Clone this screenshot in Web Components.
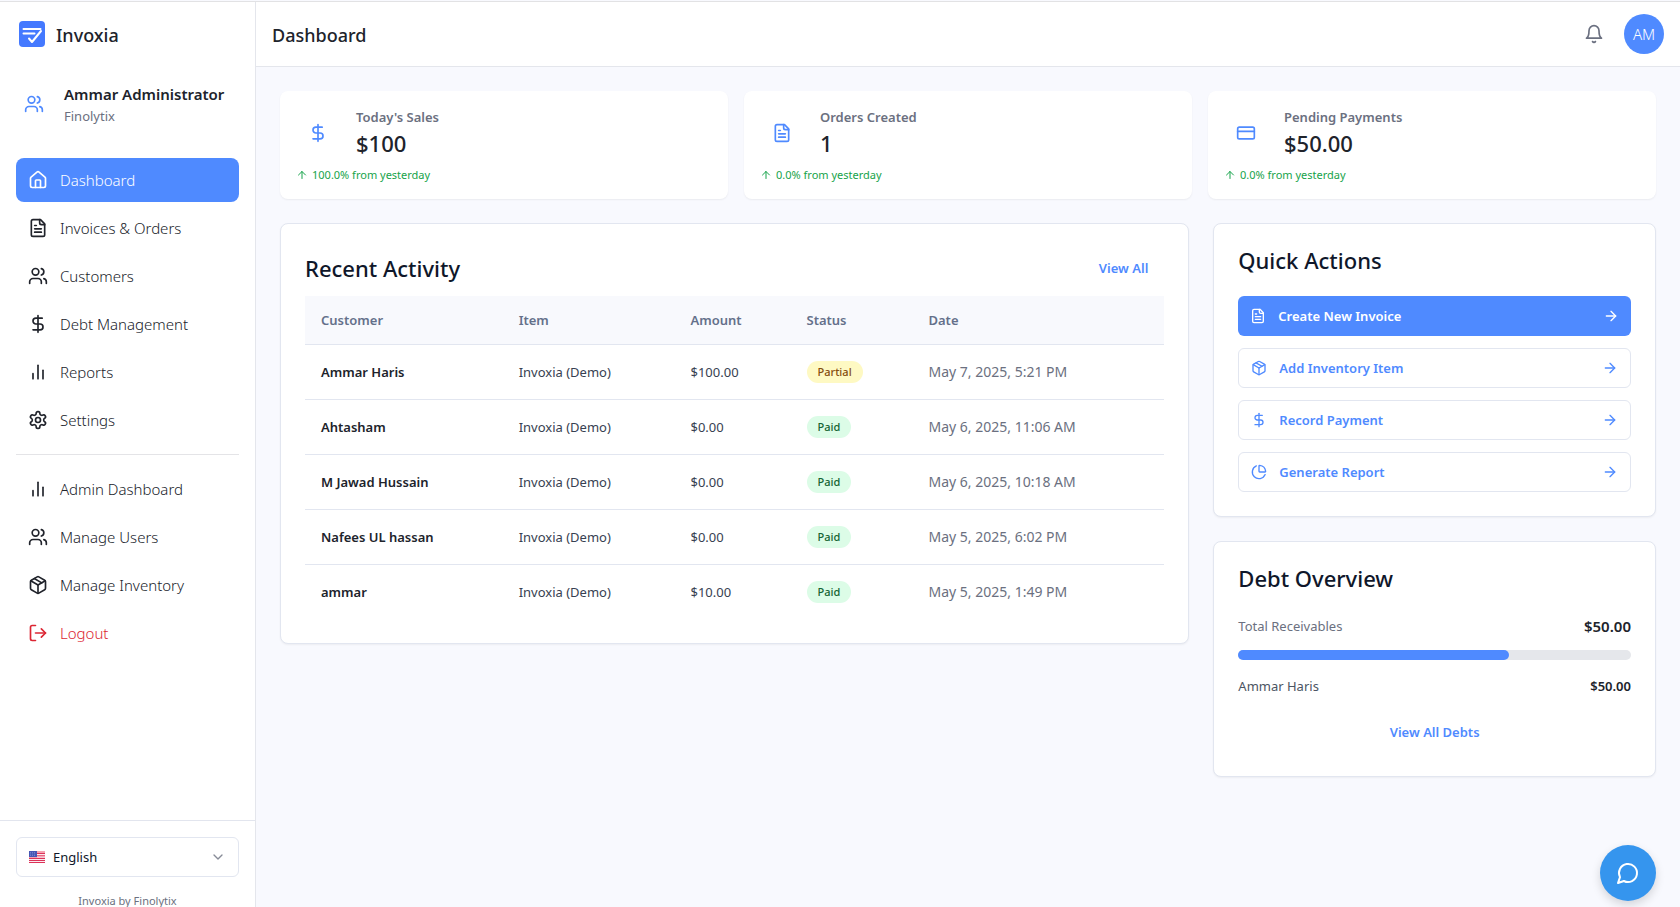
<!DOCTYPE html>
<html lang="en">
<head>
<meta charset="utf-8">
<meta name="viewport" content="width=device-width, initial-scale=1">
<title>Dashboard - Invoxia</title>
<style>
	body {
		margin: 0;
		overflow: hidden;
		background: #f8f9fe;
		color: #20232b;
		font-family: "Noto Sans", "Open Sans", sans-serif;
		font-size: 13px;
		line-height: 20px;
	}
</style>
</head>
<body>
<app-shell>
	<side-bar slot="sidebar"></side-bar>
	<top-bar slot="header" heading="Dashboard" initials="AM"></top-bar>

	<stat-card slot="stats" icon="dollar" label="Today's Sales" value="$100" change="100.0% from yesterday"></stat-card>
	<stat-card slot="stats" icon="file" label="Orders Created" value="1" change="0.0% from yesterday"></stat-card>
	<stat-card slot="stats" icon="card" label="Pending Payments" value="$50.00" change="0.0% from yesterday"></stat-card>

	<panel-card slot="main" heading="Recent Activity">
		<text-link slot="action">View All</text-link>
		<activity-table></activity-table>
	</panel-card>

	<panel-card slot="side" heading="Quick Actions">
		<action-list>
			<action-button icon="file" primary>Create New Invoice</action-button>
			<action-button icon="box">Add Inventory Item</action-button>
			<action-button icon="dollar">Record Payment</action-button>
			<action-button icon="pie">Generate Report</action-button>
		</action-list>
	</panel-card>
	<panel-card slot="side" heading="Debt Overview">
		<debt-overview></debt-overview>
	</panel-card>
</app-shell>
<chat-button></chat-button>

<script>
const ICONS = {
	home: '<path d="M15 21v-8a1 1 0 0 0-1-1h-4a1 1 0 0 0-1 1v8"/><path d="M3 10a2 2 0 0 1 .709-1.528l7-5.999a2 2 0 0 1 2.582 0l7 5.999A2 2 0 0 1 21 10v9a2 2 0 0 1-2 2H5a2 2 0 0 1-2-2z"/>',
	file: '<path d="M15 2H6a2 2 0 0 0-2 2v16a2 2 0 0 0 2 2h12a2 2 0 0 0 2-2V7Z"/><path d="M14 2v4a2 2 0 0 0 2 2h4"/><path d="M10 9H8"/><path d="M16 13H8"/><path d="M16 17H8"/>',
	users: '<path d="M16 21v-2a4 4 0 0 0-4-4H6a4 4 0 0 0-4 4v2"/><circle cx="9" cy="7" r="4"/><path d="M22 21v-2a4 4 0 0 0-3-3.87"/><path d="M16 3.13a4 4 0 0 1 0 7.75"/>',
	dollar: '<path d="M12 2v20"/><path d="M17 5H9.500a3.500 3.500 0 0 0 0 7h5a3.500 3.500 0 0 1 0 7H6"/>',
	chart: '<path d="M18 20V10"/><path d="M12 20V4"/><path d="M6 20v-6"/>',
	settings: '<path d="M12.220 2h-.44a2 2 0 0 0-2 2v.18a2 2 0 0 1-1 1.730l-.43.250a2 2 0 0 1-2 0l-.15-.080a2 2 0 0 0-2.730.730l-.22.380a2 2 0 0 0 .73 2.730l.15.100a2 2 0 0 1 1 1.720v.510a2 2 0 0 1-1 1.740l-.15.090a2 2 0 0 0-.73 2.730l.22.380a2 2 0 0 0 2.730.730l.15-.080a2 2 0 0 1 2 0l.43.250a2 2 0 0 1 1 1.730V20a2 2 0 0 0 2 2h.44a2 2 0 0 0 2-2v-.18a2 2 0 0 1 1-1.730l.43-.250a2 2 0 0 1 2 0l.15.080a2 2 0 0 0 2.730-.730l.22-.390a2 2 0 0 0-.73-2.730l-.15-.080a2 2 0 0 1-1-1.740v-.500a2 2 0 0 1 1-1.740l.15-.090a2 2 0 0 0 .73-2.730l-.22-.380a2 2 0 0 0-2.730-.730l-.15.080a2 2 0 0 1-2 0l-.43-.250a2 2 0 0 1-1-1.730V4a2 2 0 0 0-2-2z"/><circle cx="12" cy="12" r="3"/>',
	box: '<path d="M11 21.730a2 2 0 0 0 2 0l7-4A2 2 0 0 0 21 16V8a2 2 0 0 0-1-1.730l-7-4a2 2 0 0 0-2 0l-7 4A2 2 0 0 0 3 8v8a2 2 0 0 0 1 1.730z"/><path d="M12 22V12"/><path d="m3.300 7 8.700 5 8.700-5"/><path d="m7.500 4.270 9 5.150"/>',
	logout: '<path d="M9 21H5a2 2 0 0 1-2-2V5a2 2 0 0 1 2-2h4"/><path d="m16 17 5-5-5-5"/><path d="M21 12H9"/>',
	bell: '<path d="M10.268 21a2 2 0 0 0 3.464 0"/><path d="M6 8a6 6 0 0 1 12 0c0 7 3 9 3 9H3s3-2 3-9"/>',
	card: '<rect x="2" y="5" width="20" height="14" rx="2"/><path d="M2 10h20"/>',
	pie: '<path d="M21 12c.552 0 1.005-.449.950-.998a10 10 0 0 0-8.953-8.951c-.55-.055-.998.398-.998.950v8a1 1 0 0 0 1 1z"/><path d="M21.210 15.890A10 10 0 1 1 8 2.830"/>',
	right: '<path d="M5 12h14"/><path d="m12 5 7 7-7 7"/>',
	up: '<path d="m5 12 7-7 7 7"/><path d="M12 19V5"/>',
	down: '<path d="m6 9 6 6 6-6"/>',
	chat: '<path d="M7.900 20A9 9 0 1 0 4 16.100L2 22Z"/>',
};

const icon = (name, size = 20) =>
	`<svg class="icon" width="${size}" height="${size}" viewBox="0 0 24 24" fill="none" stroke="currentColor" stroke-width="2" stroke-linecap="round" stroke-linejoin="round" aria-hidden="true">${ICONS[name]}</svg>`;

// Shared by every element: box sizing and control resets
const BASE = `
	*, :host { box-sizing: border-box; }
	.icon { display: block; flex: none; }
	button { font: inherit; border: 0; margin: 0; padding: 0; background: none; color: inherit; cursor: pointer; }
	a { color: inherit; text-decoration: none; }
	h1, h2, p { margin: 0; }
`;

class BaseElement extends HTMLElement {
	constructor() {
		super();
		this.shadowDOM = this.attachShadow({ mode: "open" });
	}

	connectedCallback() {
		this.shadowDOM.innerHTML = `<style>${BASE}</style>${this.render()}`;
	}
}

class AppShell extends BaseElement {
	render() {
		return `
		<style>
		:host {
			display: grid;
			grid-template-columns: 256px 1fr;
			height: 100vh;
			margin-top: 1px;
			border-top: 1px solid #e2e2e4;
			box-sizing: content-box;
		}
		.content {
			display: flex;
			flex-direction: column;
			min-width: 0;
		}
		main {
			display: flex;
			flex-direction: column;
			gap: 24px;
			padding: 24px;
		}
		.stats {
			display: grid;
			grid-template-columns: repeat(3, 1fr);
			gap: 16px;
		}
		.panels {
			display: grid;
			grid-template-columns: repeat(3, 1fr);
			gap: 24px;
			align-items: start;
		}
		.wide { grid-column: span 2; }
		.side {
			display: flex;
			flex-direction: column;
			gap: 24px;
		}
		</style>
		<slot name="sidebar"></slot>
		<div class="content">
			<slot name="header"></slot>
			<main>
				<div class="stats"><slot name="stats"></slot></div>
				<div class="panels">
					<div class="wide"><slot name="main"></slot></div>
					<div class="side"><slot name="side"></slot></div>
				</div>
			</main>
		</div>`;
	}
}

class SideBar extends BaseElement {
	render() {
		return `
		<style>
		:host {
			display: flex;
			flex-direction: column;
			background: white;
			border-right: 1px solid #e4e6ec;
		}
		.brand {
			display: flex;
			align-items: center;
			gap: 10px;
			height: 64px;
			padding: 0 18px;
			font-size: 18px;
			font-weight: 500;
		}
		.brand span { padding-top: 2px; }
		.user {
			display: flex;
			align-items: center;
			gap: 20px;
			padding: 16px 24px;
		}
		.user > .icon { color: #4f8aff; }
		.name {
			font-size: 15px;
			font-weight: 600;
			line-height: 24px;
			white-space: nowrap;
		}
		.org { color: #6b7080; }
		nav {
			display: flex;
			flex-direction: column;
			gap: 4px;
			padding: 16px;
		}
		hr {
			width: 100%;
			margin: 8px 0;
			border: 0;
			border-top: 1px solid #e4e4e7;
		}
		footer {
			margin-top: auto;
			padding: 16px 16px 0;
			border-top: 1px solid #e2e5ee;
			text-align: center;
		}
		.credit {
			margin-top: 16px;
			font-size: 11px;
			line-height: 16px;
			color: #6b7080;
		}
		</style>
		<div class="brand">
			<svg width="28" height="28" viewBox="0 0 28 28" aria-hidden="true">
				<rect x="1" y="1" width="26" height="26" rx="4" fill="#4479ff"/>
				<path d="M5.500 9h17M5.500 13.500h11M11 18.500l3 3.500 9-11" fill="none" stroke="white" stroke-width="2" stroke-linecap="round" stroke-linejoin="round"/>
			</svg>
			<span>Invoxia</span>
		</div>
		<div class="user">
			${icon("users")}
			<div>
				<p class="name">Ammar Administrator</p>
				<p class="org">Finolytix</p>
			</div>
		</div>
		<nav>
			<nav-item icon="home" active>Dashboard</nav-item>
			<nav-item icon="file">Invoices &amp; Orders</nav-item>
			<nav-item icon="users">Customers</nav-item>
			<nav-item icon="dollar">Debt Management</nav-item>
			<nav-item icon="chart">Reports</nav-item>
			<nav-item icon="settings">Settings</nav-item>
			<hr>
			<nav-item icon="chart">Admin Dashboard</nav-item>
			<nav-item icon="users">Manage Users</nav-item>
			<nav-item icon="box">Manage Inventory</nav-item>
			<nav-item icon="logout" danger>Logout</nav-item>
		</nav>
		<footer>
			<language-select></language-select>
			<p class="credit">Invoxia by Finolytix</p>
		</footer>`;
	}
}

class NavItem extends BaseElement {
	render() {
		return `
		<style>
		:host { display: block; }
		a {
			display: flex;
			align-items: center;
			gap: 12px;
			height: 44px;
			padding: 0 12px;
			border-radius: 8px;
			font-size: 15px;
			font-weight: 300;
		}
		:host([active]) a { background: #4f8aff; color: white; }
		:host([danger]) a { color: #dc2633; }
		</style>
		<a href="#">${icon(this.getAttribute("icon"))}<slot></slot></a>`;
	}
}

class LanguageSelect extends BaseElement {
	render() {
		return `
		<style>
		:host {
			display: block;
			position: relative;
			color: #0f172a;
		}
		select {
			appearance: none;
			display: block;
			width: 100%;
			height: 40px;
			padding: 0 36px;
			border: 1px solid #e2e6f0;
			border-radius: 6px;
			background: white;
			color: inherit;
			font: inherit;
		}
		/* flag and chevron lie over the select box */
		.flag, .icon {
			position: absolute;
			pointer-events: none;
		}
		.flag { left: 13px; top: 14px; }
		.icon { right: 13px; top: 12px; color: #878b97; }
		</style>
		<select aria-label="Language"><option>English</option></select>
		<svg class="flag" width="16" height="12" viewBox="0 0 16 12" aria-hidden="true">
			<rect width="16" height="12" fill="#f5a3b2"/>
			<path d="M0 2.500h16M0 5h16M0 7.500h16M0 9.500h16M0 11.500h16" stroke="#dc3358" stroke-width="1"/>
			<path d="M8 3.500h8M8 6h8M0 8.500h16M0 10.500h16" stroke="#fbeaf0" stroke-width="1"/>
			<rect width="8" height="6" fill="#4656b4"/>
			<path d="M1 1.500h6M1 3h6M1 4.500h6" stroke="#6f80cc" stroke-width="1" stroke-dasharray="1 1"/>
		</svg>
		${icon("down", 16)}`;
	}
}

class TopBar extends BaseElement {
	render() {
		return `
		<style>
		:host {
			display: flex;
			align-items: center;
			gap: 10px;
			height: 65px;
			padding: 0 16px;
			background: white;
			border-bottom: 1px solid #e4e6ec;
		}
		h1 {
			flex: 1;
			padding-top: 2px;
			font-size: 18px;
			font-weight: 500;
		}
		button {
			display: grid;
			place-items: center;
			width: 40px;
			height: 40px;
			border-radius: 50%;
		}
		.bell { color: #6b7080; }
		.avatar {
			background: #4f8aff;
			color: white;
			font-size: 15px;
			font-weight: 300;
		}
		</style>
		<h1>${this.getAttribute("heading")}</h1>
		<button class="bell" aria-label="Notifications">${icon("bell")}</button>
		<button class="avatar">${this.getAttribute("initials")}</button>`;
	}
}

class StatCard extends BaseElement {
	render() {
		return `
		<style>
		:host {
			display: block;
			padding: 16px;
			background: white;
			border-radius: 8px;
			box-shadow: 0 1px 2px rgba(0, 0, 0, 0.06);
		}
		.row {
			display: flex;
			align-items: center;
			gap: 28px;
			padding-left: 12px;
		}
		.row > .icon { color: #4f8aff; }
		.label { color: #6b7080; font-weight: 600; }
		.value {
			font-size: 22px;
			font-weight: 500;
			line-height: 32px;
		}
		.change {
			display: flex;
			align-items: center;
			gap: 4px;
			margin-top: 8px;
			font-size: 11px;
			line-height: 16px;
			color: #16a34a;
		}
		</style>
		<div class="row">
			${icon(this.getAttribute("icon"))}
			<div>
				<p class="label">${this.getAttribute("label")}</p>
				<p class="value">${this.getAttribute("value")}</p>
			</div>
		</div>
		<p class="change">${icon("up", 12)}<span>${this.getAttribute("change")}</span></p>`;
	}
}

class PanelCard extends BaseElement {
	render() {
		const action = this.querySelector("[slot=action]");
		return `
		<style>
		:host {
			display: block;
			padding: 24px;
			background: white;
			border: 1px solid #e2e6f0;
			border-radius: 8px;
			box-shadow: 0 1px 2px rgba(0, 0, 0, 0.05);
		}
		header {
			display: flex;
			align-items: center;
			justify-content: space-between;
			margin-bottom: ${action ? 8 : 24}px;
		}
		h2 {
			font-size: 22px;
			font-weight: 500;
			line-height: 24px;
			color: #0f172a;
		}
		</style>
		<header>
			<h2>${this.getAttribute("heading")}</h2>
			<slot name="action"></slot>
		</header>
		<slot></slot>`;
	}
}

class TextLink extends BaseElement {
	render() {
		return `
		<style>
		:host { display: block; }
		button {
			height: 40px;
			padding: 0 16px;
			color: #4f8aff;
			font-weight: 600;
		}
		</style>
		<button><slot></slot></button>`;
	}
}

class ActivityTable extends BaseElement {
	render() {
		const rows = [
			["Ammar Haris", "Invoxia (Demo)", "$100.00", "Partial", "May 7, 2025, 5:21 PM"],
			["Ahtasham", "Invoxia (Demo)", "$0.00", "Paid", "May 6, 2025, 11:06 AM"],
			["M Jawad Hussain", "Invoxia (Demo)", "$0.00", "Paid", "May 6, 2025, 10:18 AM"],
			["Nafees UL hassan", "Invoxia (Demo)", "$0.00", "Paid", "May 5, 2025, 6:02 PM"],
			["ammar", "Invoxia (Demo)", "$10.00", "Paid", "May 5, 2025, 1:49 PM"],
		];
		return `
		<style>
		:host { display: block; }
		table {
			width: 100%;
			table-layout: fixed;
			border-collapse: separate;
			border-spacing: 0;
			text-align: left;
		}
		th, td {
			padding: 0 16px;
			border-bottom: 1px solid #e2e6f0;
		}
		th {
			height: 49px;
			background: #f8f9fd;
			color: #64708a;
			font-weight: 600;
		}
		td {
			height: 55px;
			color: #374151;
		}
		tr:last-child td { height: 54px; border: 0; }
		thead th { border-bottom: 1px solid #e2e6f0; }
		th:nth-child(1) { width: 23%; }
		th:nth-child(2) { width: 20%; }
		th:nth-child(3) { width: 116px; }
		th:nth-child(4) { width: 122px; }
		td:first-child { color: #20232b; font-weight: 600; }
		td:last-child { color: #6b7080; font-size: 14px; }
		.badge {
			display: inline-block;
			padding: 3px 11px;
			border-radius: 11px;
			font-size: 11px;
			font-weight: 500;
			line-height: 16px;
			vertical-align: middle;
		}
		.paid { background: #dcfce7; color: #166534; }
		.partial { background: #fef9c3; color: #854d0e; }
		</style>
		<table>
			<thead>
				<tr><th>Customer</th><th>Item</th><th>Amount</th><th>Status</th><th>Date</th></tr>
			</thead>
			<tbody>
				${rows.map(([customer, item, amount, status, date]) => `
				<tr>
					<td>${customer}</td>
					<td>${item}</td>
					<td>${amount}</td>
					<td><span class="badge ${status.toLowerCase()}">${status}</span></td>
					<td>${date}</td>
				</tr>`).join("")}
			</tbody>
		</table>`;
	}
}

class ActionList extends BaseElement {
	render() {
		return `
		<style>
		:host {
			display: flex;
			flex-direction: column;
			gap: 12px;
		}
		</style>
		<slot></slot>`;
	}
}

class ActionButton extends BaseElement {
	render() {
		return `
		<style>
		:host { display: block; }
		button {
			display: flex;
			align-items: center;
			gap: 12px;
			width: 100%;
			height: 40px;
			padding: 0 12px;
			border: 1px solid #e2e6f0;
			border-radius: 6px;
			color: #4f8aff;
			font-weight: 600;
			text-align: left;
		}
		.text { flex: 1; }
		:host([primary]) button {
			border: 0;
			background: #4f8aff;
			color: white;
		}
		</style>
		<button>
			${icon(this.getAttribute("icon"), 16)}
			<span class="text"><slot></slot></span>
			${icon("right", 16)}
		</button>`;
	}
}

class DebtOverview extends BaseElement {
	render() {
		return `
		<style>
		:host { display: block; }
		.line {
			display: flex;
			align-items: center;
			justify-content: space-between;
		}
		.label { color: #6b7080; }
		.name { color: #4b5563; }
		.total {
			font-size: 15px;
			font-weight: 600;
			line-height: 24px;
		}
		.amount { font-weight: 600; }
		.bar {
			height: 10px;
			margin: 12px 0 16px;
			border-radius: 5px;
			background: #e5e7eb;
		}
		.fill {
			width: 69%;
			height: 100%;
			border-radius: 5px;
			background: #4f8aff;
		}
		text-link {
			display: flex;
			justify-content: center;
			margin-top: 16px;
		}
		</style>
		<div class="line">
			<span class="label">Total Receivables</span>
			<span class="total">$50.00</span>
		</div>
		<div class="bar"><div class="fill"></div></div>
		<div class="line">
			<span class="name">Ammar Haris</span>
			<span class="amount">$50.00</span>
		</div>
		<text-link>View All Debts</text-link>`;
	}
}

class ChatButton extends BaseElement {
	render() {
		return `
		<style>
		:host {
			position: fixed;
			right: 24px;
			bottom: 6px;
		}
		button {
			display: grid;
			place-items: center;
			width: 56px;
			height: 56px;
			border-radius: 50%;
			background: #3595ee;
			color: white;
			box-shadow: 0 4px 10px rgba(0, 0, 0, 0.15);
		}
		</style>
		<button aria-label="Open chat">${icon("chat", 24)}</button>`;
	}
}

customElements.define("app-shell", AppShell);
customElements.define("side-bar", SideBar);
customElements.define("nav-item", NavItem);
customElements.define("language-select", LanguageSelect);
customElements.define("top-bar", TopBar);
customElements.define("stat-card", StatCard);
customElements.define("panel-card", PanelCard);
customElements.define("text-link", TextLink);
customElements.define("activity-table", ActivityTable);
customElements.define("action-list", ActionList);
customElements.define("action-button", ActionButton);
customElements.define("debt-overview", DebtOverview);
customElements.define("chat-button", ChatButton);
</script>
</body>
</html>
